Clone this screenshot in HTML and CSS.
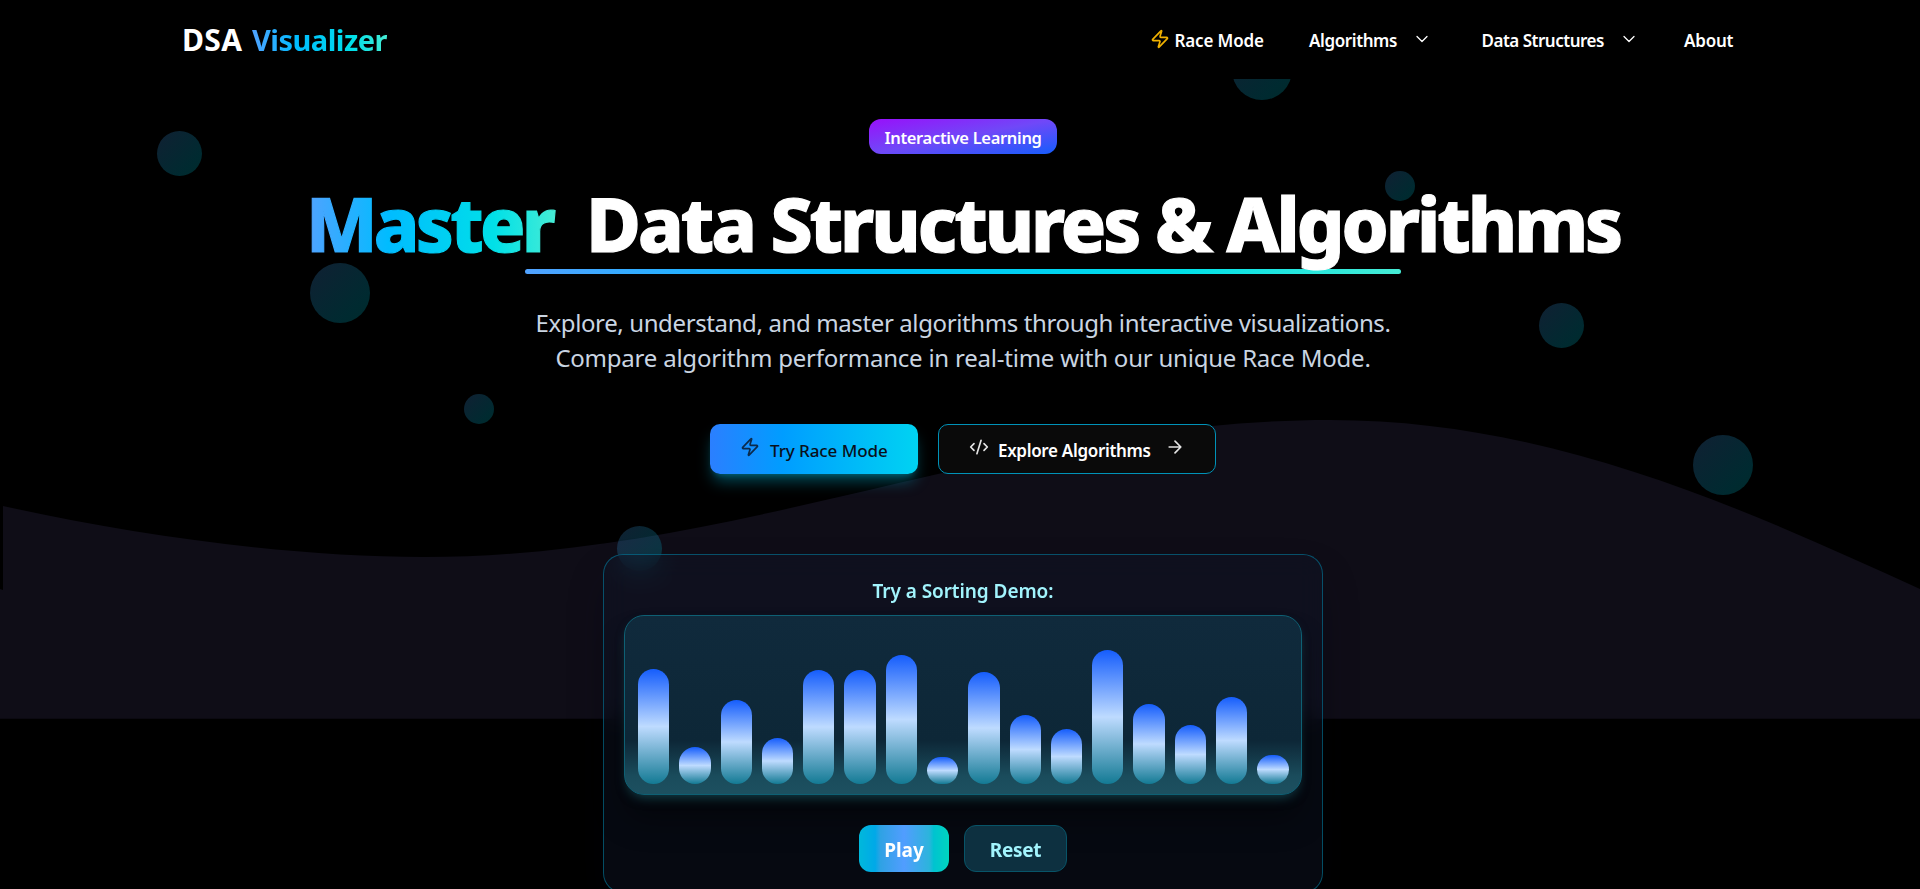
FILE: index.html
```
<!DOCTYPE html>
<html lang="en">
<head>
<meta charset="utf-8">
<title>DSA Visualizer</title>
<link rel="stylesheet" href="styles.css">
</head>
<body>
<header class="navbar">
  <div class="brand"><span class="brand-dsa">DSA</span><span class="brand-name gradient-text">Visualizer</span></div>
  <nav class="nav">
    <a class="nav-race"><svg class="icon bolt" viewBox="0 0 24 24"><path d="M4 14a1 1 0 0 1-.78-1.63l9.9-10.2a.5.5 0 0 1 .86.46l-1.92 6.02A1 1 0 0 0 13 10h7a1 1 0 0 1 .78 1.63l-9.9 10.2a.5.5 0 0 1-.86-.46l1.92-6.02A1 1 0 0 0 11 14z"/></svg><span class="t-race">Race Mode</span></a>
    <a class="nav-alg"><span class="t-alg">Algorithms</span><svg class="icon chev" viewBox="0 0 24 24"><path d="m6 9 6 6 6-6"/></svg></a>
    <a class="nav-data"><span class="t-data">Data Structures</span><svg class="icon chev" viewBox="0 0 24 24"><path d="m6 9 6 6 6-6"/></svg></a>
    <a class="nav-about"><span class="t-about">About</span></a>
  </nav>
</header>
<main class="hero">
  <svg class="wave" viewBox="0 0 1920 889"><path d="M3 506C140 536 290 557 424 557C740 557 1010 420 1330 420C1550 420 1740 507 1920 589V718.7H0V589L3 590Z"/></svg>
  <i class="dot d1"></i><i class="dot d2"></i><i class="dot d3"></i><i class="dot d4"></i><i class="dot d5"></i><i class="dot d6"></i><i class="dot d7"></i><i class="dot d8"></i>
  <div class="content">
    <span class="badge"><span class="t-badge">Interactive Learning</span></span>
    <h1 class="title"><span class="t-master gradient-text">Master</span><span class="t-title">Data Structures &amp; Algorithms</span></h1>
    <div class="rule"></div>
    <p class="lead"><span class="t-lead1">Explore, understand, and master algorithms through interactive visualizations.</span><br><span class="t-lead2">Compare algorithm performance in real-time with our unique Race Mode.</span></p>
    <div class="actions">
      <a class="btn primary"><svg class="icon b20" viewBox="0 0 24 24"><path d="M4 14a1 1 0 0 1-.78-1.63l9.9-10.2a.5.5 0 0 1 .86.46l-1.92 6.02A1 1 0 0 0 13 10h7a1 1 0 0 1 .78 1.63l-9.9 10.2a.5.5 0 0 1-.86-.46l1.92-6.02A1 1 0 0 0 11 14z"/></svg><span class="t-try">Try Race Mode</span></a>
      <a class="btn outline"><svg class="icon b20" viewBox="0 0 24 24"><path d="m18 16 4-4-4-4M6 8l-4 4 4 4M14.5 4l-5 16"/></svg><span class="t-explore">Explore Algorithms</span><svg class="icon b20 arrow" viewBox="0 0 24 24"><path d="M5 12h14M12 5l7 7-7 7"/></svg></a>
    </div>
    <section class="demo">
      <h2 class="demo-title"><span class="t-demo">Try a Sorting Demo:</span></h2>
      <div class="chart">
        <i class="bar" style="height:115px"></i><i class="bar" style="height:37px"></i><i class="bar" style="height:84px"></i><i class="bar" style="height:46px"></i><i class="bar" style="height:114px"></i><i class="bar" style="height:114px"></i><i class="bar" style="height:129px"></i><i class="bar" style="height:27px"></i><i class="bar" style="height:112px"></i><i class="bar" style="height:69px"></i><i class="bar" style="height:55px"></i><i class="bar" style="height:134px"></i><i class="bar" style="height:80px"></i><i class="bar" style="height:59px"></i><i class="bar" style="height:87px"></i><i class="bar" style="height:29px"></i>
      </div>
      <div class="controls"><a class="ctl play"><span class="t-play">Play</span></a><a class="ctl reset"><span class="t-reset">Reset</span></a></div>
    </section>
  </div>
</main>
</body>
</html>
```
FILE: styles.css
```
* { box-sizing: border-box; }
body { margin: 0; height: 889px; overflow: hidden; background: #000; color: #fff; font-family: "Noto Sans", "Open Sans", sans-serif; }
span { white-space: nowrap; }
.icon { fill: none; stroke: currentColor; stroke-width: 2; stroke-linecap: round; stroke-linejoin: round; flex: none; display: block; }
.gradient-text { background: linear-gradient(90deg, #51a2ff 0%, #00bcff 33%, #00e0e8 75%, #46ecd5 100%); -webkit-background-clip: text; background-clip: text; color: transparent; }
.navbar { position: relative; z-index: 2; height: 79px; background: #000; display: flex; justify-content: space-between; padding: 0 183px 0 182px; align-items: center; }
.brand { display: flex; font-size: 29px; font-weight: 700; line-height: 40px; margin-top: 1px; }
.brand-dsa { width: 70px; font-size: 30px; letter-spacing: .4px; }
.brand-name { letter-spacing: -.53px; }
.nav { display: flex; font-size: 17px; font-weight: 600; line-height: 24px; margin-top: 2px; }
.nav a { display: flex; align-items: center; }
.nav-race { width: 159px; gap: 4.5px; letter-spacing: -.15px; }
.nav-alg { width: 172.5px; letter-spacing: -.4px; }
.t-alg { width: 103px; }
.nav-data { width: 202.5px; letter-spacing: -.49px; }
.t-data { width: 137.5px; }
.nav-about { width: 53px; letter-spacing: -.22px; }
.bolt { width: 20px; height: 20px; color: #f0b100; margin-top: -4px; }
.chev { width: 20px; height: 20px; margin-top: -4px; stroke-width: 1.5; }
.wave { position: absolute; left: 0; top: 0; width: 1920px; height: 889px; }
.wave path { fill: #0f0d17; }
.dot { position: absolute; width: 45px; height: 45px; border-radius: 50%; opacity: .2; background: linear-gradient(135deg, #51a2ff, #00d3f2 75%, #00d5d8); }
.d1 { left: 157px; top: 131px; }
.d2 { left: 310px; top: 263px; width: 60px; height: 60px; }
.d3 { left: 464px; top: 394px; width: 30px; height: 30px; }
.d4 { left: 617px; top: 526px; }
.d5 { left: 1232px; top: 40px; width: 60px; height: 60px; }
.d6 { left: 1385px; top: 171px; width: 30px; height: 30px; }
.d7 { left: 1539px; top: 303px; }
.d8 { left: 1693px; top: 435px; width: 60px; height: 60px; }
.content { position: relative; width: 1320px; margin: 0 auto; padding: 40px 0 0 6px; display: flex; flex-direction: column; align-items: center; }
.badge { width: 188px; height: 35px; border-radius: 12px; background: linear-gradient(to bottom right, #9810fa, #7048f8 50%, #155dfc); display: flex; align-items: center; justify-content: center; font-size: 16.5px; font-weight: 600; letter-spacing: -.32px; padding-top: 1px; }
.title { align-self: flex-start; margin: 25px 0 0; height: 90px; line-height: 89px; font-size: 75px; font-weight: 800; display: grid; grid-template-columns: 280px auto; justify-items: start; -webkit-text-stroke-width: 1.2px; }
.t-master { letter-spacing: -3.75px; padding-right: 4px; }
.t-title { letter-spacing: -3.01px; }
.rule { width: 876px; height: 5px; border-radius: 5px; background: linear-gradient(90deg, #51a2ff 0%, #00bcff 33%, #00e0e8 75%, #46ecd5 100%); position: relative; z-index: -1; }
.lead { margin: 31px 0 0; font-size: 24px; line-height: 35px; text-align: center; color: #cad5e2; }
.t-lead1 { letter-spacing: -.38px; }
.t-lead2 { letter-spacing: -.223px; }
.actions { margin-top: 49px; display: flex; gap: 20px; }
.btn { height: 50px; border-radius: 10px; display: flex; align-items: center; font-size: 17px; }
.btn > span { padding-top: 3px; }
.b20 { width: 20px; height: 20px; margin-top: -4px; }
.primary { width: 208px; padding-left: 30px; gap: 10px; color: #0a0f1a; background: linear-gradient(90deg, #2b7fff, #009dff 35%, #00d3f2); box-shadow: 0 10px 15px -3px rgba(0, 184, 219, .4), 0 4px 6px -4px rgba(0, 184, 219, .4); font-weight: 500; letter-spacing: -.07px; }
.primary .icon { color: #0b2a4c; }
.outline { width: 278px; border: 1px solid #0092b8; background: #0a0a0a; padding-left: 30px; gap: 9px; font-weight: 600; letter-spacing: -.32px; }
.outline .icon { color: #e4e4e4; }
.t-explore { width: 153px; }
.arrow { margin-left: 5px; }
.demo { margin-top: 80px; width: 720px; height: 339px; border: 1px solid rgba(0, 146, 184, .5); border-radius: 20px; padding: 19px 20px 0; background: rgba(15, 23, 43, .4); backdrop-filter: blur(12px); box-shadow: 0 20px 40px -8px rgba(2, 6, 24, .4); }
.demo-title { margin: 0; font-size: 19px; line-height: 34px; font-weight: 600; letter-spacing: -.07px; color: #a2f4fd; text-align: center; }
.chart { margin-top: 7px; height: 180px; border: 1px solid #0e6074; border-radius: 20px; background: linear-gradient(to bottom, #102a3c, #0d2737 70%, #1a4c5c 90%, #1d5060); box-shadow: 0 6px 12px -4px rgba(30, 110, 125, .6), 0 25px 30px rgba(0, 0, 0, .35); padding: 0 12.5px 10px 13px; display: flex; align-items: flex-end; gap: 10px; }
.bar { flex: 1; border-radius: 16px; background: linear-gradient(to bottom, #155dfc, #bedbff 50%, #137a94); }
.controls { margin-top: 30px; display: flex; justify-content: center; gap: 15px; }
.ctl { height: 47px; border-radius: 12px; display: flex; align-items: center; justify-content: center; font-size: 19px; font-weight: 700; padding-top: 2px; }
.play { width: 90px; background: linear-gradient(90deg, #00b8db, #00a9e8 18%, #2fa2e4 24%, #519dff 50%, #2cb4dc 78%, #00c3d0 83%, #00d5be); }
.reset { width: 103px; background: #0d3040; border: 1px solid #075468; color: #a2f4fd; letter-spacing: -.3px; }
```
